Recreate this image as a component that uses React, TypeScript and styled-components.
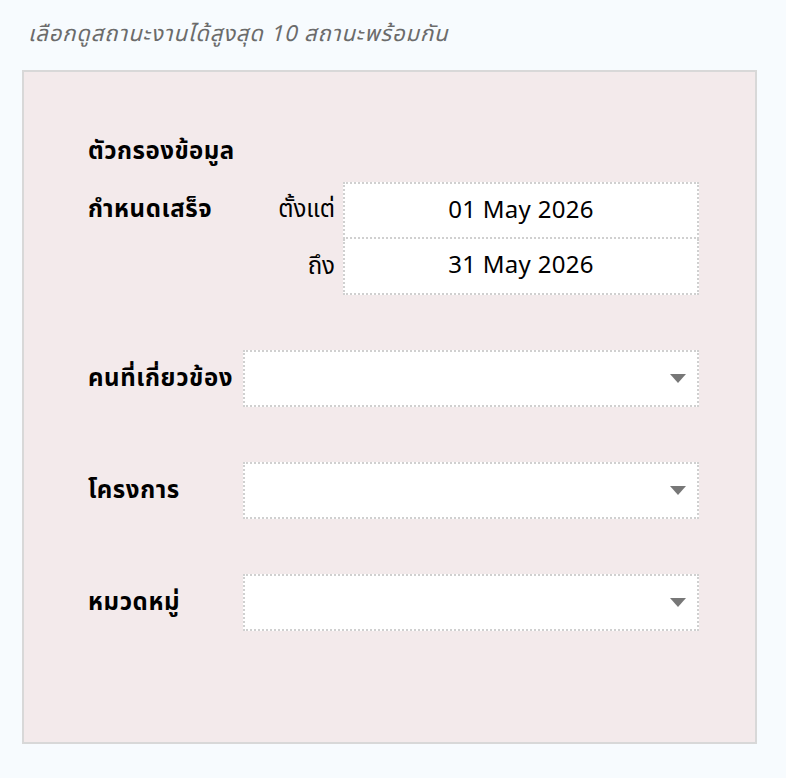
import React, { FC } from 'react';
import styled, { createGlobalStyle } from 'styled-components';

const GlobalStyle = createGlobalStyle`
	html, body {
		margin: 0;
		padding: 0;
		background: #f7fbfe;
	}
	body {
		font-family: 'Noto Sans Thai', 'Noto Sans', 'Liberation Sans', sans-serif;
		color: #000;
	}
`;

type SelectRowProps = {
	label: string;
};

const SelectRow: FC<SelectRowProps> = ({ label }) => (
	<Row>
		<RowLabel>{label}</RowLabel>
		<SelectBox>
			<Caret width="16" height="9" viewBox="0 0 16 9">
				<path d="M0 0 L16 0 L8 9 Z" fill="#777" />
			</Caret>
		</SelectBox>
	</Row>
);

const App: FC = () => {
	return (
		<Page>
			<GlobalStyle />
			<Hint>เลือกดูสถานะงานได้สูงสุด 10 สถานะพร้อมกัน</Hint>
			<Panel>
				<PanelTitle>ตัวกรองข้อมูล</PanelTitle>
				<DateRow>
					<RowLabel>กำหนดเสร็จ</RowLabel>
					<DateGrid>
						<SubLabel>ตั้งแต่</SubLabel>
						<DateBox>01 May 2026</DateBox>
						<SubLabel>ถึง</SubLabel>
						<DateBox last>31 May 2026</DateBox>
					</DateGrid>
				</DateRow>
				<SelectRow label="คนที่เกี่ยวข้อง" />
				<SelectRow label="โครงการ" />
				<SelectRow label="หมวดหมู่" />
			</Panel>
		</Page>
	);
};

const Page = styled.div`
	width: 786px;
	min-height: 778px;
	padding: 20px 0 0 22px;
	box-sizing: border-box;
`;

const Hint = styled.div`
	padding-left: 6px;
	height: 30px;
	font-size: 22px;
	line-height: 30px;
	font-style: italic;
	letter-spacing: 0.9px;
	color: #6b6b6b;
	margin-bottom: 20px;
`;

const Panel = styled.div`
	width: 735px;
	height: 674px;
	box-sizing: border-box;
	background: #f3eaeb;
	border: 2px solid #d8d8d8;
	padding: 64px 0 0 64px;
	display: flex;
	flex-direction: column;
`;

const PanelTitle = styled.div`
	font-size: 24px;
	font-weight: 700;
	line-height: 32px;
	letter-spacing: 0.5px;
	margin-bottom: 14px;
`;

const DateRow = styled.div`
	display: flex;
	align-items: flex-start;
	margin-bottom: 55px;
`;

const Row = styled.div`
	display: flex;
	align-items: center;
	margin-bottom: 55px;
`;

const RowLabel = styled.div`
	width: 155px;
	flex-shrink: 0;
	font-size: 24px;
	font-weight: 700;
	line-height: 56px;
	letter-spacing: 0.6px;
	white-space: nowrap;
`;

const DateGrid = styled.div`
	display: grid;
	grid-template-columns: 92px 356px;
	column-gap: 8px;
`;

const SubLabel = styled.div`
	font-size: 24px;
	line-height: 56px;
	text-align: right;
	white-space: nowrap;
`;

const DateBox = styled.div<{ last?: boolean }>`
	box-sizing: border-box;
	background: #fff;
	border: 2px dotted #d0d0d0;
	border-top: ${(props) => (props.last ? 'none' : '2px dotted #d0d0d0')};
	height: ${(props) => (props.last ? '56px' : '57px')};
	display: flex;
	align-items: center;
	justify-content: center;
	font-size: 24px;
	letter-spacing: 0.3px;
`;

const SelectBox = styled.div`
	width: 456px;
	height: 57px;
	box-sizing: border-box;
	background: #fff;
	border: 2px dotted #d0d0d0;
	display: flex;
	align-items: center;
	justify-content: flex-end;
	padding-right: 11px;
`;

const Caret = styled.svg`
	display: block;
`;

export default App;
